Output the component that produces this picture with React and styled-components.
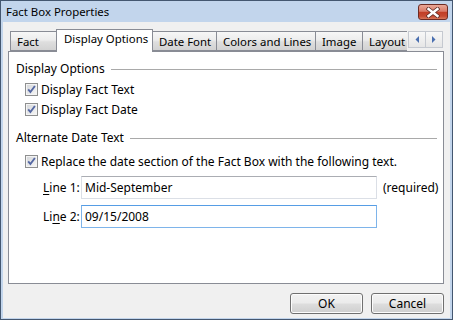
import React from 'react'
import styled, { createGlobalStyle } from 'styled-components'

const GlobalStyle = createGlobalStyle`
  body {
    margin: 0;
    background: #ffffff;
  }
  * {
    box-sizing: border-box;
  }
`;

const Window = styled.div`
  width: 453px;
  height: 320px;
  border: 1px solid #445770;
  background: #c2d5ec;
  display: flex;
  flex-direction: column;
  font-family: "Noto Sans", "Segoe UI", sans-serif;
  font-size: 12px;
  color: #000000;
`;

const TitleBar = styled.div`
  height: 21px;
  display: flex;
  justify-content: space-between;
  align-items: flex-start;
  padding-left: 5px;
`;

const Title = styled.div`
  line-height: 21px;
  font-size: 11.4px;
`;

const CloseButton = styled.div`
  width: 30px;
  height: 16px;
  margin: 3px 4px 0 0;
  border: 1px solid #6e2b22;
  border-radius: 3px;
  background: linear-gradient(#eaa898 0%, #d97a67 45%, #c23e26 52%, #c64a31 80%, #d9795c 100%);
  display: flex;
  align-items: center;
  justify-content: center;
`;

const Body = styled.div`
  flex: 1;
  margin: 0 2px 1px 2px;
  background: #f0f0f0;
  padding: 7px 6px 0 5px;
  display: flex;
  flex-direction: column;
`;

const TabRow = styled.div`
  height: 23px;
  display: flex;
  margin-bottom: -1px;
  padding-left: 2px;
  position: relative;
  z-index: 1;
`;

const TabViewport = styled.div`
  width: 397px;
  overflow: hidden;
  display: flex;
  align-items: flex-end;
`;

const Tab = styled.div`
  flex: none;
  width: ${({ $w }) => $w}px;
  height: ${({ $active }) => ($active ? 23 : 20)}px;
  margin-bottom: ${({ $active }) => ($active ? 0 : 1)}px;
  margin-left: ${({ $first }) => ($first ? 0 : -1)}px;
  padding-left: ${({ $active }) => ($active ? 7 : 6)}px;
  font-size: 11.4px;
  line-height: ${({ $active }) => ($active ? 18 : 19)}px;
  border: 1px solid #898c95;
  border-bottom: ${({ $active }) => ($active ? 'none' : '1px solid #898c95')};
  background: ${({ $active }) =>
    $active ? '#ffffff' : 'linear-gradient(#f7f7f7 0%, #ececec 45%, #dedede 55%, #d2d2d2 100%)'};
  position: relative;
  z-index: ${({ $active }) => ($active ? 2 : 1)};
  white-space: nowrap;
`;

const Arrows = styled.div`
  display: flex;
  margin: 2px 0 0 1px;
  height: 17px;
`;

const ArrowButton = styled.div`
  width: 18px;
  height: 17px;
  margin-left: ${({ $first }) => ($first ? 0 : -1)}px;
  border: 1px solid #c5c9d0;
  background: linear-gradient(#f8f8f8, #e6e6e6);
  display: flex;
  align-items: center;
  justify-content: center;
`;

const Panel = styled.div`
  height: 233px;
  border: 1px solid #898c95;
  background: #ffffff;
  padding: 10px 6px 0 0;
  display: flex;
  flex-direction: column;
`;

const GroupHeader = styled.div`
  height: 14px;
  line-height: 14px;
  display: flex;
  align-items: center;
  gap: 6px;
  padding-left: 7px;
  margin-top: ${({ $top }) => $top}px;
  white-space: nowrap;

  &::after {
    content: '';
    flex: 1;
    height: 1px;
    background: #a9a9a9;
  }
`;

const CheckRow = styled.div`
  height: 20px;
  display: flex;
  align-items: center;
  gap: 3px;
  padding-left: 16px;
  margin-top: ${({ $top }) => $top || 0}px;
  white-space: nowrap;
`;

const FieldRow = styled.div`
  height: 23px;
  display: flex;
  align-items: center;
  padding-left: 34px;
  margin-top: ${({ $top }) => $top}px;
`;

const FieldLabel = styled.label`
  width: 38px;
  flex: none;
  white-space: nowrap;
`;

const Key = styled.span`
  text-decoration: underline;
  text-underline-offset: 2px;
`;

const TextBox = styled.div`
  width: 296px;
  height: 23px;
  flex: none;
  border: 1px solid ${({ $focus }) => ($focus ? '#7eb4ea' : '#dbdfe6')};
  border-top-color: ${({ $focus }) => ($focus ? '#569de5' : '#abadb3')};
  background: #ffffff;
  padding-left: 3px;
  line-height: 21px;
  white-space: nowrap;
`;

const Note = styled.span`
  margin-left: 6px;
  white-space: nowrap;
`;

const ButtonRow = styled.div`
  display: flex;
  justify-content: flex-end;
  gap: 8px;
  margin-top: 9px;
`;

const Button = styled.div`
  width: 73px;
  height: 21px;
  border: 1px solid #707070;
  border-radius: 3px;
  background: linear-gradient(#f2f2f2 0%, #ebebeb 48%, #dddddd 52%, #cfcfcf 100%);
  box-shadow: inset 0 0 0 1px #fcfcfc;
  text-align: center;
  line-height: 19px;
`;

const CheckBox = () => (
  <svg width="13" height="13" viewBox="0 0 13 13">
    <defs>
      <linearGradient id="cbfill" x1="0" y1="0" x2="1" y2="1">
        <stop offset="0" stopColor="#d6d8db" />
        <stop offset="1" stopColor="#f5f5f5" />
      </linearGradient>
    </defs>
    <rect x="0.5" y="0.5" width="12" height="12" fill="#f4f4f4" stroke="#8e8f8f" />
    <rect x="2" y="2" width="9" height="9" fill="url(#cbfill)" />
    <path d="M3.2 6.4 L5.4 9 L9.9 3" fill="none" stroke="#5568a3" strokeWidth="1.9" />
  </svg>
);

const CloseX = () => (
  <svg width="14" height="11" viewBox="0 0 14 11">
    <path d="M2.5 2 L11.5 9 M11.5 2 L2.5 9" stroke="#5b2a24" strokeWidth="4" strokeLinecap="square" />
    <path d="M2.5 2 L11.5 9 M11.5 2 L2.5 9" stroke="#ffffff" strokeWidth="2.4" strokeLinecap="square" />
  </svg>
);

const Triangle = ({ dir }) => (
  <svg width="4" height="7" viewBox="0 0 4 7">
    <path d={dir === 'left' ? 'M4 0 L0.5 3.5 L4 7 Z' : 'M0 0 L3.5 3.5 L0 7 Z'} fill="#4a6fb0" />
  </svg>
);

const tabs = [
  { label: 'Fact', w: 47 },
  { label: 'Display Options', w: 97, active: true },
  { label: 'Date Font', w: 65 },
  { label: 'Colors and Lines', w: 100 },
  { label: 'Image', w: 48 },
  { label: 'Layout', w: 52 },
];

const App = () => {
  return (
    <>
      <GlobalStyle />
      <Window>
        <TitleBar>
          <Title>Fact Box Properties</Title>
          <CloseButton>
            <CloseX />
          </CloseButton>
        </TitleBar>
        <Body>
          <TabRow>
            <TabViewport>
              {tabs.map((t, i) => (
                <Tab key={t.label} $w={t.w} $active={t.active} $first={i === 0}>
                  {t.label}
                </Tab>
              ))}
            </TabViewport>
            <Arrows>
              <ArrowButton $first>
                <Triangle dir="left" />
              </ArrowButton>
              <ArrowButton>
                <Triangle dir="right" />
              </ArrowButton>
            </Arrows>
          </TabRow>
          <Panel>
            <GroupHeader $top={0}>Display Options</GroupHeader>
            <CheckRow $top={3}>
              <CheckBox />
              Display Fact Text
            </CheckRow>
            <CheckRow>
              <CheckBox />
              Display Fact Date
            </CheckRow>
            <GroupHeader $top={12}>Alternate Date Text</GroupHeader>
            <CheckRow $top={6}>
              <CheckBox />
              Replace the date section of the Fact Box with the following text.
            </CheckRow>
            <FieldRow $top={5}>
              <FieldLabel>
                <Key>L</Key>ine 1:
              </FieldLabel>
              <TextBox>Mid-September</TextBox>
              <Note>(required)</Note>
            </FieldRow>
            <FieldRow $top={6}>
              <FieldLabel>
                Li<Key>n</Key>e 2:
              </FieldLabel>
              <TextBox $focus>09/15/2008</TextBox>
            </FieldRow>
          </Panel>
          <ButtonRow>
            <Button>OK</Button>
            <Button>Cancel</Button>
          </ButtonRow>
        </Body>
      </Window>
    </>
  )
}

export default App
